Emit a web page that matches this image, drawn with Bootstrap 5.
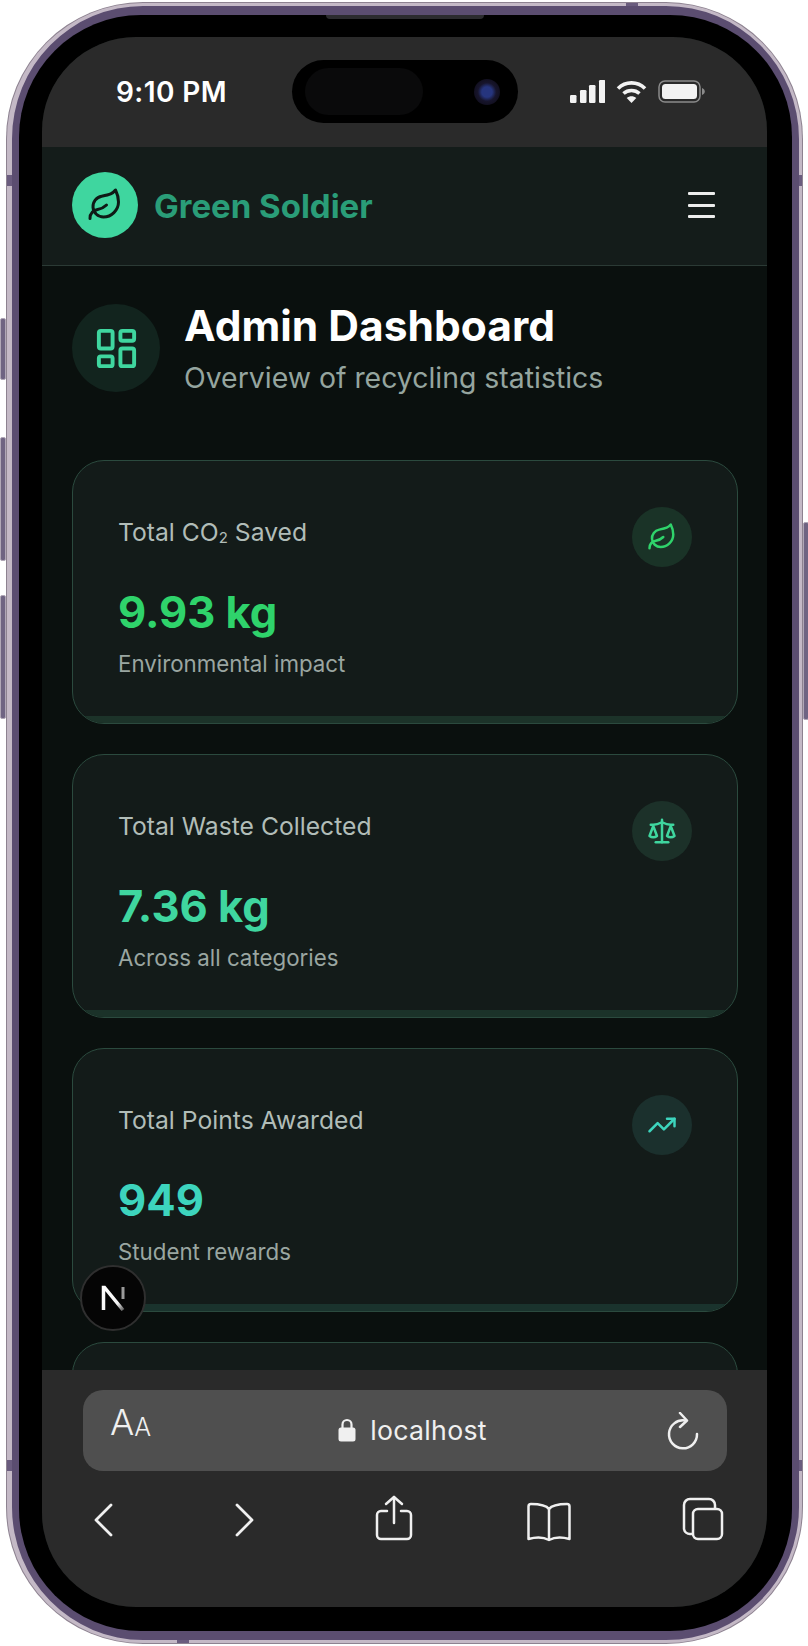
<!DOCTYPE html>
<html lang="en">
<head>
  <meta charset="UTF-8" />
  <title>Green Soldier - Admin Dashboard</title>
  <link href="https://cdn.jsdelivr.net/npm/bootstrap@5.3.0/dist/css/bootstrap.min.css" rel="stylesheet">
  <style>
    html, body { height: 100%; overflow: hidden; }
    body { background: #fff; font-family: "Inter", "Liberation Sans", sans-serif; }
    svg { display: block; }

    /* phone shell */
    .phone-shell {
      position: relative;
      width: 795px; height: 1640px;
      margin: 3px 0 0 7px;
      padding: 9px 7px 9px 7px;
      border: 3px solid #c4b9c6;
      border-left-width: 5px;
      border-radius: 136px;
      background: #5b4d70;
      box-shadow: 0 0 0 1px #8d8290;
    }
    .side-btn {
      position: absolute;
      width: 6px;
      background: #6f6482;
      border: 1px solid #b0a7b6;
      border-radius: 2px;
    }
    .btn-silent { left: -12px; top: 312px; height: 62px; }
    .btn-up { left: -12px; top: 431px; height: 124px; }
    .btn-down { left: -12px; top: 589px; height: 124px; }
    .btn-power { right: -10px; top: 516px; height: 198px; }
    .speaker-slit {
      position: absolute; left: 314px; top: 9px;
      width: 158px; height: 4px;
      background: #2b2b2e; border-radius: 0 0 4px 4px;
    }
    .band-mark { position: absolute; background: #6a5c7e; }
    .band-top { left: 614px; top: -3px; width: 12px; height: 3px; }
    .band-l1 { left: -5px; top: 169px; width: 5px; height: 11px; }
    .band-l2 { left: -5px; top: 1454px; width: 5px; height: 11px; }
    .band-r1 { right: -3px; top: 169px; width: 3px; height: 11px; }
    .band-r2 { right: -3px; top: 1454px; width: 3px; height: 11px; }
    .band-bot { left: 165px; bottom: -3px; width: 12px; height: 3px; }
    .bezel {
      width: 100%; height: 100%;
      padding: 22px 25px 23px 23px;
      background: #000;
      border-radius: 122px;
    }
    .screen {
      position: relative;
      width: 725px; height: 1570px;
      background: #0a100e;
      border-radius: 94px;
      overflow: hidden;
    }

    /* status bar */
    .status-bar { height: 110px; background: #2a2a2a; flex-shrink: 0; }
    .clock { width: 250px; padding-left: 74px; font-size: 28px; letter-spacing: .4px; line-height: 34px; font-weight: 600; color: #fff; white-space: nowrap; margin-top: 38px; }
    .island {
      width: 226px; height: 63px; margin-top: 23px;
      background: #000; border-radius: 32px;
      padding: 0 18px 0 13px;
    }
    .island-inner { width: 118px; height: 47px; background: #0a0a0b; border-radius: 24px; }
    .lens { width: 26px; height: 26px; border-radius: 50%; background: radial-gradient(circle, #26357e 0 28%, #17152c 50%, #0b0810 100%); }
    .status-icons { padding-left: 52px; gap: 11px; margin-top: 43px; }

    /* app nav */
    .app-nav {
      height: 119px; flex-shrink: 0;
      padding: 0 52px 2px 30px;
      background: #141c1a;
      border-bottom: 1px solid #2b3a35;
    }
    .logo-disc { width: 66px; height: 66px; background: #3fd69f; }
    .brand-name { font-size: 33px; font-weight: 700; color: #2a9d78; margin: 3px 0 0 16px; }
    .menu-bars { width: 27px; gap: 8.5px; }
    .menu-bars span { display: block; height: 3px; background: #ececec; border-radius: 1px; }

    /* page */
    .page-body { flex: 1 1 auto; min-height: 0; overflow: hidden; padding: 35px 29px 0 30px; }
    .head-row { margin-bottom: 65px; }
    .head-disc { width: 88px; height: 88px; background: #12241e; color: #3fd69f; }
    .page-title { font-size: 42.5px; line-height: 50px; font-weight: 700; color: #fff; margin: 0; }
    .page-sub { font-size: 28.4px; line-height: 34px; color: #95a59f; margin: 10px 0 0; }

    /* stat cards */
    .stat-card {
      height: 264px; flex-shrink: 0;
      margin-bottom: 30px;
      background: #131b19;
      border: 1px solid #2b4a3e;
      border-radius: 32px;
      overflow: hidden;
    }
    .stat-body { padding: 44px 45px 0 45px; }
    .stat-label { font-size: 24.7px; line-height: 54px; color: #b1bdb8; }
    .stat-label sub { font-size: 15px; bottom: -.15em; }
    .stat-value { font-size: 43.5px; line-height: 52px; font-weight: 700; margin-top: 27px; }
    .stat-note { font-size: 22.3px; line-height: 30px; color: #9aa6a1; margin-top: 11px; }
    .stat-disc { width: 60px; height: 60px; margin-top: 2px; }
    .stat-strip { height: 7px; margin-top: auto; }

    .tone-green .stat-value, .tone-green .stat-disc { color: #2fd36b; }
    .tone-green .stat-disc { background: #1a3327; }
    .tone-green .stat-strip { background: #1c3329; }
    .tone-mint .stat-value, .tone-mint .stat-disc { color: #3fd69f; }
    .tone-mint .stat-disc { background: #1c3129; }
    .tone-mint .stat-strip { background: #1b3229; }
    .tone-teal .stat-value, .tone-teal .stat-disc { color: #3dd4bd; }
    .tone-teal .stat-disc { background: #1b302d; }
    .tone-teal .stat-strip { background: #1a332d; }

    /* next.js dev badge */
    .dev-badge {
      position: absolute; left: 38px; top: 1228px;
      width: 66px; height: 66px;
      background: #050505;
      border: 2px solid #2f2f2f;
    }

    /* safari bar */
    .safari-bar { height: 237px; flex-shrink: 0; background: #2a2a2a; padding: 20px 40px 0 41px; }
    .url-pill { height: 81px; background: #4f4f4f; border-radius: 20px; padding: 0 27px; color: #f0f0f0; }
    .aa-big { font-size: 36px; line-height: 1; font-weight: 300; }
    .aa-small { font-size: 25px; line-height: 1; font-weight: 300; }
    .aa-mark { margin-top: -18px; }
    .url-mid { margin-left: 8px; }
    .url-text { font-size: 26.7px; line-height: 1; margin-left: 14px; letter-spacing: .3px; }
    .tool-row { padding: 24px 0 0 10px; color: #f0f0f0; }
    .tool-fwd { margin-top: 8px; margin-left: 122px; }
    .tool-back { margin-top: 8px; }
    .tool-share { margin-left: 120px; }
    .tool-book { margin-top: 7px; margin-left: 113px; }
    .tool-tabs { margin-top: 2px; margin-left: 110px; }
  </style>
</head>
<body>
  <div class="phone-shell">
    <div class="side-btn btn-silent"></div>
    <div class="side-btn btn-up"></div>
    <div class="side-btn btn-down"></div>
    <div class="side-btn btn-power"></div>
    <div class="speaker-slit"></div>
    <div class="band-mark band-top"></div>
    <div class="band-mark band-l1"></div>
    <div class="band-mark band-l2"></div>
    <div class="band-mark band-r1"></div>
    <div class="band-mark band-r2"></div>
    <div class="band-mark band-bot"></div>

    <div class="bezel">
      <div class="screen d-flex flex-column">

        <div class="status-bar d-flex align-items-start">
          <div class="clock">9:10 PM</div>
          <div class="island d-flex align-items-center justify-content-between">
            <div class="island-inner"></div>
            <div class="lens"></div>
          </div>
          <div class="status-icons d-flex align-items-center">
            <svg width="35" height="24" viewBox="0 0 35 24" fill="#f2f2f2">
              <rect x="0" y="15" width="6.5" height="8" rx="1.2"/>
              <rect x="10" y="10" width="6.5" height="13" rx="1.2"/>
              <rect x="19" y="5" width="6.5" height="18" rx="1.2"/>
              <rect x="29" y="0" width="6.5" height="23" rx="1.2"/>
            </svg>
            <svg width="31" height="24" viewBox="0 0 31 24" fill="none" stroke="#f2f2f2" stroke-width="3.6">
              <path d="M2 8.500C9.500 1 21.500 1 29 8.500"/>
              <path d="M7.500 13.500c4.500-4 11.500-4 16 0"/>
              <path d="M15.500 23l-4.800-5c2.800-2.200 6.800-2.200 9.600 0z" fill="#f2f2f2" stroke="none"/>
            </svg>
            <svg width="47" height="24" viewBox="0 0 47 24">
              <rect x="1" y="1" width="41" height="21" rx="6" fill="none" stroke="#8b8b8b" stroke-width="1.500"/>
              <rect x="4" y="4" width="35" height="15" rx="3.500" fill="#f2f2f2"/>
              <path d="M44 8c2 .8 2.800 2 2.800 3.500S46 14.200 44 15z" fill="#8b8b8b"/>
            </svg>
          </div>
        </div>

        <nav class="app-nav d-flex align-items-center justify-content-between">
          <div class="d-flex align-items-center">
            <div class="logo-disc rounded-circle d-flex align-items-center justify-content-center">
              <svg width="36" height="36" viewBox="0 0 24 24" fill="none" stroke="#0f1a16" stroke-width="2" stroke-linecap="round" stroke-linejoin="round">
                <path d="M11 20A7 7 0 0 1 9.800 6.100C15.500 5 17 4.480 19 2c1 2 2 4.180 2 8 0 5.500-4.780 10-10 10Z"/>
                <path d="M2 21c0-3 1.850-5.360 5.080-6C9.500 14.520 12 13 13 12"/>
              </svg>
            </div>
            <span class="brand-name">Green Soldier</span>
          </div>
          <div class="menu-bars d-flex flex-column">
            <span></span><span></span><span></span>
          </div>
        </nav>

        <main class="page-body">
          <div class="head-row d-flex align-items-center gap-4">
            <div class="head-disc rounded-circle d-flex align-items-center justify-content-center flex-shrink-0">
              <svg width="47" height="47" viewBox="0 0 24 24" fill="none" stroke="currentColor" stroke-width="2" stroke-linecap="round" stroke-linejoin="round">
                <rect x="3" y="3" width="7" height="9" rx="1"/>
                <rect x="14" y="3" width="7" height="5" rx="1"/>
                <rect x="14" y="12" width="7" height="9" rx="1"/>
                <rect x="3" y="16" width="7" height="5" rx="1"/>
              </svg>
            </div>
            <div>
              <h1 class="page-title">Admin Dashboard</h1>
              <p class="page-sub">Overview of recycling statistics</p>
            </div>
          </div>

          <div class="card stat-card tone-green">
            <div class="stat-body d-flex justify-content-between">
              <div>
                <div class="stat-label">Total CO<sub>2</sub> Saved</div>
                <div class="stat-value">9.93 kg</div>
                <div class="stat-note">Environmental impact</div>
              </div>
              <div class="stat-disc rounded-circle d-flex align-items-center justify-content-center">
                <svg width="30" height="30" viewBox="0 0 24 24" fill="none" stroke="currentColor" stroke-width="2" stroke-linecap="round" stroke-linejoin="round">
                  <path d="M11 20A7 7 0 0 1 9.800 6.100C15.500 5 17 4.480 19 2c1 2 2 4.180 2 8 0 5.500-4.780 10-10 10Z"/>
                  <path d="M2 21c0-3 1.850-5.360 5.080-6C9.500 14.520 12 13 13 12"/>
                </svg>
              </div>
            </div>
            <div class="stat-strip"></div>
          </div>

          <div class="card stat-card tone-mint">
            <div class="stat-body d-flex justify-content-between">
              <div>
                <div class="stat-label">Total Waste Collected</div>
                <div class="stat-value">7.36 kg</div>
                <div class="stat-note">Across all categories</div>
              </div>
              <div class="stat-disc rounded-circle d-flex align-items-center justify-content-center">
                <svg width="30" height="30" viewBox="0 0 24 24" fill="none" stroke="currentColor" stroke-width="2" stroke-linecap="round" stroke-linejoin="round">
                  <path d="m16 16 3-8 3 8c-.87.650-1.920 1-3 1s-2.130-.350-3-1Z"/>
                  <path d="m2 16 3-8 3 8c-.87.650-1.920 1-3 1s-2.130-.350-3-1Z"/>
                  <path d="M7 21h10"/>
                  <path d="M12 3v18"/>
                  <path d="M3 7h2c2 0 5-1 7-2 2 1 5 2 7 2h2"/>
                </svg>
              </div>
            </div>
            <div class="stat-strip"></div>
          </div>

          <div class="card stat-card tone-teal">
            <div class="stat-body d-flex justify-content-between">
              <div>
                <div class="stat-label">Total Points Awarded</div>
                <div class="stat-value">949</div>
                <div class="stat-note">Student rewards</div>
              </div>
              <div class="stat-disc rounded-circle d-flex align-items-center justify-content-center">
                <svg width="30" height="30" viewBox="0 0 24 24" fill="none" stroke="currentColor" stroke-width="2" stroke-linecap="round" stroke-linejoin="round">
                  <polyline points="22 7 13.500 15.500 8.500 10.500 2 17"/>
                  <polyline points="16 7 22 7 22 13"/>
                </svg>
              </div>
            </div>
            <div class="stat-strip"></div>
          </div>

          <div class="card stat-card tone-mint"></div>
        </main>

        <div class="dev-badge rounded-circle d-flex align-items-center justify-content-center">
          <svg width="26" height="26" viewBox="0 0 26 26" fill="none">
            <defs>
              <linearGradient id="nFade" x1="3" y1="3" x2="24" y2="25" gradientUnits="userSpaceOnUse">
                <stop offset="0" stop-color="#fff"/>
                <stop offset=".7" stop-color="#f4f4f4"/>
                <stop offset="1" stop-color="#555"/>
              </linearGradient>
            </defs>
            <path d="M3.500 25V2.500h1L23 25" stroke="url(#nFade)" stroke-width="3.500"/>
            <path d="M23 2v12" stroke="#9a9a9a" stroke-width="3"/>
          </svg>
        </div>

        <div class="safari-bar">
          <div class="url-pill d-flex align-items-center">
            <div class="aa-mark d-flex align-items-end">
              <span class="aa-big">A</span><span class="aa-small">A</span>
            </div>
            <div class="url-mid flex-grow-1 d-flex align-items-center justify-content-center">
              <svg width="18" height="24" viewBox="0 0 18 24" fill="#f0f0f0">
                <path d="M4.500 10V6.500a4.500 4.500 0 0 1 9 0V10" fill="none" stroke="#f0f0f0" stroke-width="2.200"/>
                <rect x="0.500" y="9.500" width="17" height="14" rx="2.500"/>
              </svg>
              <span class="url-text">localhost</span>
            </div>
            <svg width="34" height="38" viewBox="0 0 34 38" fill="none" stroke="#f0f0f0" stroke-width="2.500" stroke-linecap="round" stroke-linejoin="round">
              <path d="M19 8.500A14 14 0 1 0 31 22"/>
              <path d="M14 1l7 7.500-7 6.500"/>
            </svg>
          </div>
          <div class="tool-row d-flex align-items-start">
            <svg class="tool-back" width="20" height="34" viewBox="0 0 20 34" fill="none" stroke="currentColor" stroke-width="2.800" stroke-linecap="round" stroke-linejoin="round"><path d="M18 2 3 17l15 15"/></svg>
            <svg class="tool-fwd" width="20" height="34" viewBox="0 0 20 34" fill="none" stroke="currentColor" stroke-width="2.800" stroke-linecap="round" stroke-linejoin="round"><path d="m2 2 15 15L2 32"/></svg>
            <svg class="tool-share" width="38" height="46" viewBox="0 0 38 46" fill="none" stroke="currentColor" stroke-width="2.500" stroke-linecap="round" stroke-linejoin="round">
              <path d="M12 16H6a4 4 0 0 0-4 4v20a4 4 0 0 0 4 4h26a4 4 0 0 0 4-4V20a4 4 0 0 0-4-4h-6"/>
              <path d="M19 28V2"/>
              <path d="m11 9 8-7 8 7"/>
            </svg>
            <svg class="tool-book" width="46" height="40" viewBox="0 0 46 40" fill="none" stroke="currentColor" stroke-width="2.500" stroke-linecap="round" stroke-linejoin="round">
              <path d="M23 7C20 3 14 2 5 2c-1.500 0-2.500 1-2.500 2.500V37c7-2 15-2 20.500 1 5.500-3 13.500-3 20.500-1V4.500C43.500 3 42.500 2 41 2c-9 0-15 1-18 5Z"/>
              <path d="M23 7v30"/>
            </svg>
            <svg class="tool-tabs" width="42" height="44" viewBox="0 0 42 44" fill="none" stroke="currentColor" stroke-width="2.500" stroke-linejoin="round">
              <rect x="11" y="12" width="29" height="30" rx="5"/>
              <path d="M33 12V8a6 6 0 0 0-6-6H8a6 6 0 0 0-6 6v24a6 6 0 0 0 6 5h3"/>
            </svg>
          </div>
        </div>

      </div>
    </div>
  </div>
</body>
</html>
